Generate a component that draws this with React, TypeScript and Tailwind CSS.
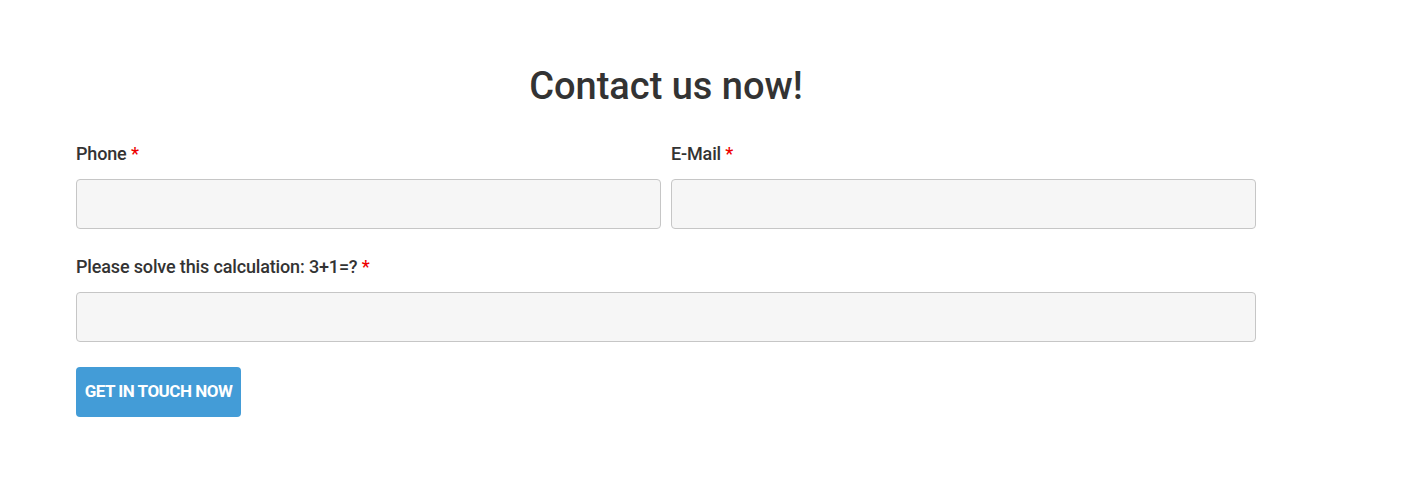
import React from 'react';

const Label: React.FC<{ text: string }> = ({ text }) => (
  <label className="block text-[18px] font-medium leading-[22px] text-[#333] tracking-[-0.15px]">
    {text} <span className="text-[#e00]">*</span>
  </label>
);

const Input: React.FC = () => (
  <input
    type="text"
    className="mt-[14px] block h-[50px] w-full rounded-[4px] border border-[#c6c6c6] bg-[#f6f6f6] px-3 outline-none"
  />
);

export default function App() {
  return (
    <div className="min-h-[493px] bg-white font-['Roboto',sans-serif]">
      <div className="w-[1180px] ml-[76px] pt-[64px]">
        <h2 className="text-center text-[38px] font-medium leading-[44px] text-[#333]">Contact us now!</h2>

        <form className="mt-[35px]" onSubmit={e => e.preventDefault()}>
          <div className="flex gap-[10px]">
            <div className="flex-1">
              <Label text="Phone" />
              <Input />
            </div>
            <div className="flex-1">
              <Label text="E-Mail" />
              <Input />
            </div>
          </div>

          <div className="mt-[27px]">
            <Label text="Please solve this calculation: 3+1=?" />
            <Input />
          </div>

          <button
            type="submit"
            className="mt-[25px] h-[50px] w-[165px] rounded-[4px] bg-[#439cd7] text-[17px] font-bold uppercase tracking-[-0.5px] text-white"
          >
            Get in touch now
          </button>
        </form>
      </div>
    </div>
  );
}
